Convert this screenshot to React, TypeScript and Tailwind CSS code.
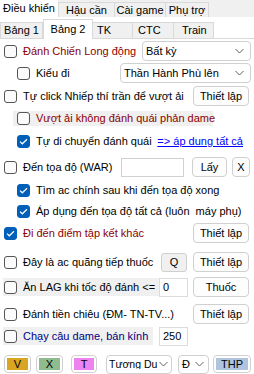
import React from 'react';

const Check = ({ on }: { on?: boolean }) => (
  <span
    className={`flex h-[13px] w-[13px] shrink-0 items-center justify-center rounded-[3px] border ${
      on ? 'border-[#005fb8] bg-[#005fb8]' : 'border-[#555555] bg-[#fbfbfb]'
    }`}
  >
    {on && (
      <svg width="9" height="7" viewBox="0 0 9 7">
        <path d="M1 3.6l2.3 2.2L8 1.2" fill="none" stroke="white" strokeWidth="1.2" />
      </svg>
    )}
  </span>
);

const Chevron = () => (
  <svg width="9" height="6" viewBox="0 0 9 6" className="shrink-0">
    <path d="M0.5 1l4 4 4-4" fill="none" stroke="#606060" strokeWidth="1" />
  </svg>
);

const Btn = ({ children, w = 'w-[56px]' }: { children: React.ReactNode; w?: string }) => (
  <button
    className={`flex h-[20px] ${w} shrink-0 items-center justify-center rounded-[4px] border border-[#d0d0d0] bg-[#fdfdfd] leading-none text-black`}
  >
    {children}
  </button>
);

const ColorBtn = ({ label, bg, w }: { label: string; bg: string; w: string }) => (
  <button className={`flex h-[18px] ${w} shrink-0 rounded-[4px] border border-[#d0d0d0] bg-white p-[2px]`}>
    <span className={`flex h-full w-full items-center justify-center leading-none text-black ${bg}`}>
      {label}
    </span>
  </button>
);

const App: React.FC = () => {
  return (
    <div className="h-[374px] w-[254px] overflow-hidden whitespace-nowrap bg-white font-['Liberation_Sans',Arial,sans-serif] text-[11px] leading-none text-black">
      {/* outer tabs */}
      <div className="flex h-[17px] items-end bg-[#f0f0f0]">
        <div className="flex h-[17px] w-[58px] items-center justify-center bg-white">Điều khiển</div>
        <div className="flex h-[15px] w-[57px] items-center justify-center border border-b-0 border-[#d9d9d9]">Hậu cần</div>
        <div className="flex h-[15px] w-[51px] items-center justify-center border border-b-0 border-l-0 border-[#d9d9d9]">Cài game</div>
        <div className="flex h-[15px] w-[43px] items-center justify-center border border-b-0 border-l-0 border-[#d9d9d9]">Phụ trợ</div>
      </div>

      {/* inner tabs */}
      <div className="flex h-[22px] items-end border-b border-[#d9d9d9]">
        <div className="flex h-[16px] w-[43px] items-center justify-center border border-b-0 border-[#d9d9d9] bg-[#f0f0f0]">Bảng 1</div>
        <div className="mb-[-1px] flex h-[20px] w-[50px] items-center justify-center border border-b-0 border-[#d9d9d9] bg-white">Bảng 2</div>
        <div className="flex h-[16px] w-[40px] items-center border border-b-0 border-l-0 border-[#d9d9d9] bg-[#f0f0f0] pl-[4px]">TK</div>
        <div className="flex h-[16px] w-[41px] items-center border border-b-0 border-l-0 border-[#d9d9d9] bg-[#f0f0f0] pl-[5px]">CTC</div>
        <div className="flex h-[16px] w-[40px] items-center border border-b-0 border-l-0 border-[#d9d9d9] bg-[#f0f0f0] pl-[8px]">Train</div>
      </div>

      {/* rows */}
      <div className="mt-[1px] flex h-[22px] items-center pl-[4px] pr-[3px]">
        <Check />
        <span className="ml-[6px] text-[#8b0000]">Đánh Chiến Long động</span>
        <div className="ml-auto flex h-[20px] w-[109px] items-center justify-between rounded-[4px] border border-[#d0d0d0] bg-white pl-[3px] pr-[6px]">
          <span>Bất kỳ</span>
          <Chevron />
        </div>
      </div>

      <div className="flex h-[22px] items-center pl-[17px] pr-[3px]">
        <Check />
        <span className="ml-[6px]">Kiểu đi</span>
        <div className="ml-auto flex h-[20px] w-[131px] items-center justify-between rounded-[4px] border border-[#d0d0d0] bg-white pl-[3px] pr-[6px]">
          <span>Thần Hành Phù lên</span>
          <Chevron />
        </div>
      </div>

      <div className="flex h-[24px] items-center pl-[4px] pr-[5px]">
        <Check />
        <span className="ml-[6px]">Tự click Nhiếp thí trần để vượt ải</span>
        <div className="ml-auto">
          <Btn>Thiết lập</Btn>
        </div>
      </div>

      <div className="flex h-[20px] items-center pl-[13px]">
        <div className="flex h-[15px] w-[200px] items-center bg-[#f0f0f0] pl-[4px]">
          <Check />
          <span className="ml-[6px] text-[#8b0000]">Vượt ải không đánh quái phản dame</span>
        </div>
      </div>

      <div className="flex h-[26px] items-center pl-[17px] pr-[11px]">
        <Check on />
        <span className="ml-[6px]">Tự di chuyển đánh quái</span>
        <span className="ml-auto text-[#0000ff] underline">=&gt; áp dung tất cả</span>
      </div>

      <div className="flex h-[26px] items-center pl-[4px] pr-[4px]">
        <Check />
        <span className="ml-[6px]">Đến tọa độ (WAR)</span>
        <div className="ml-auto h-[19px] w-[63px] border border-[#d0d0d0] bg-white" />
        <div className="ml-[8px]">
          <Btn w="w-[35px]">Lấy</Btn>
        </div>
        <div className="ml-[5px]">
          <Btn w="w-[18px]">X</Btn>
        </div>
      </div>

      <div className="flex h-[20px] items-center pl-[17px]">
        <Check on />
        <span className="ml-[6px]">Tìm ac chính sau khi đến tọa độ xong</span>
      </div>

      <div className="flex h-[22px] items-center pl-[17px]">
        <Check on />
        <span className="ml-[6px] whitespace-pre">Áp dụng đến tọa độ tất cả (luôn  máy phụ)</span>
      </div>

      <div className="flex h-[22px] items-center pl-[4px] pr-[5px]">
        <Check on />
        <span className="ml-[6px] text-[#8b0000]">Đi đến điểm tập kết khác</span>
        <div className="ml-auto">
          <Btn>Thiết lập</Btn>
        </div>
      </div>

      <div className="mt-[6px] flex h-[24px] items-center pl-[4px] pr-[5px]">
        <Check />
        <span className="ml-[6px]">Đây là ac quãng tiếp thuốc</span>
        <div className="ml-auto flex h-[19px] w-[26px] items-center justify-center rounded-[3px] border border-[#d0d0d0] bg-[#f0f0f0]">
          Q
        </div>
        <div className="ml-[6px]">
          <Btn>Thiết lập</Btn>
        </div>
      </div>

      <div className="mt-[2px] flex h-[22px] items-center pl-[3px] pr-[5px]">
        <div className="flex h-[18px] w-[156px] items-center bg-[#f0f0f0] pl-[1px]">
          <Check />
          <span className="ml-[6px]">Ăn LAG khi tốc độ đánh &lt;=</span>
        </div>
        <div className="flex h-[19px] w-[29px] items-center border border-[#dcdcdc] bg-white pl-[3px]">0</div>
        <div className="ml-auto">
          <Btn>Thuốc</Btn>
        </div>
      </div>

      <div className="mt-[4px] flex h-[24px] items-center pl-[4px] pr-[5px]">
        <Check />
        <span className="ml-[6px]">Đánh tiền chiêu (ĐM- TN-TV...)</span>
        <div className="ml-auto">
          <Btn>Thiết lập</Btn>
        </div>
      </div>

      <div className="flex h-[20px] items-center pl-[3px]">
        <div className="flex h-[18px] w-[150px] items-center bg-[#f0f0f0] pl-[1px]">
          <Check />
          <span className="ml-[6px] text-[#000080]">Chạy câu dame, bán kính</span>
        </div>
        <div className="ml-[6px] flex h-[19px] w-[29px] items-center border border-[#dcdcdc] bg-white pl-[3px]">250</div>
      </div>

      <div className="mt-[8px] flex h-[20px] items-center pl-[4px]">
        <ColorBtn label="V" bg="bg-[#daa520]" w="w-[27px]" />
        <div className="ml-[5px]">
          <ColorBtn label="X" bg="bg-[#8fbc8f]" w="w-[27px]" />
        </div>
        <div className="ml-[8px]">
          <ColorBtn label="T" bg="bg-[#ee82ee]" w="w-[26px]" />
        </div>
        <div className="ml-[9px] flex h-[19px] w-[66px] items-center gap-[2px] rounded-[4px] border border-[#d0d0d0] bg-white pl-[2px] pr-[3px]">
          <span className="min-w-0 flex-1 overflow-hidden text-[10.5px]">Tương Du</span>
          <Chevron />
        </div>
        <div className="ml-[6px] flex h-[19px] w-[31px] items-center justify-between rounded-[4px] border border-[#d0d0d0] bg-white pl-[3px] pr-[4px]">
          <span>Đ</span>
          <Chevron />
        </div>
        <div className="ml-[4px]">
          <ColorBtn label="THP" bg="bg-[#b0c4de]" w="w-[38px]" />
        </div>
      </div>
    </div>
  );
};

export default App;
